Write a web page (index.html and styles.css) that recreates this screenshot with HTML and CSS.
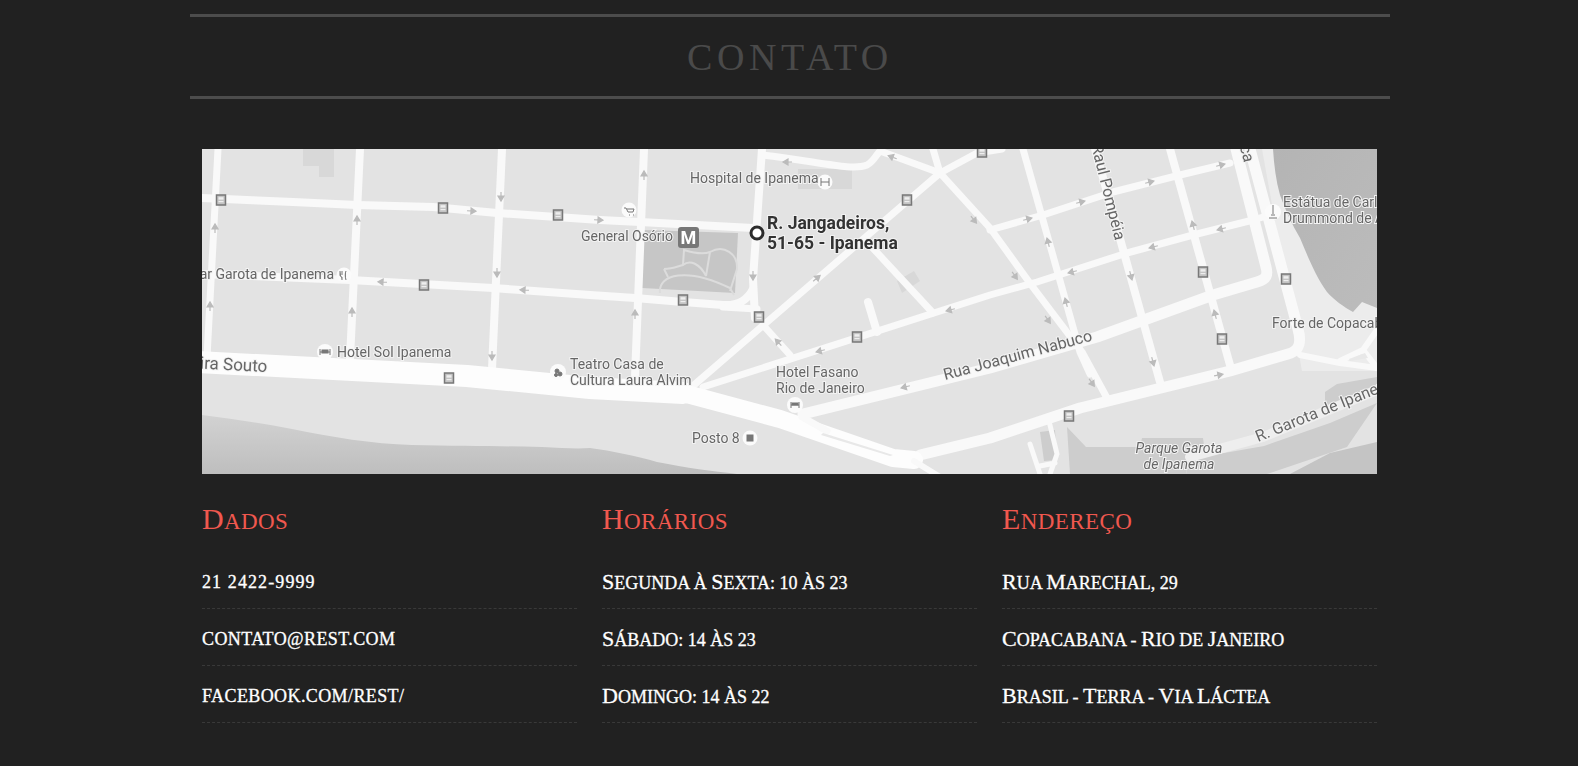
FILE: index.html
```html
<!DOCTYPE html>
<html lang="pt">
<head>
<meta charset="utf-8">
<title>Contato</title>
<link rel="stylesheet" href="styles.css">
</head>
<body>
<main class="page">
  <header class="title-bar"><h1 class="title">CONTATO</h1></header>
  <section class="content">
    <svg class="map" viewBox="0 0 1175 325" width="1175" height="325" role="img" aria-label="Mapa de Ipanema">
      <defs>
        <linearGradient id="sea1" x1="0" y1="0" x2="0" y2="1"><stop offset="0" stop-color="#d2d2d2"/><stop offset="1" stop-color="#bebebe"/></linearGradient>
        <linearGradient id="sea2" x1="0" y1="0" x2="1" y2="1"><stop offset="0" stop-color="#b4b4b4"/><stop offset="1" stop-color="#bcbcbc"/></linearGradient>
        <g id="bus"><rect x="-4.5" y="-5" width="9" height="10" fill="#c4c4c4" stroke="#777" stroke-width="1.5"/><rect x="-2.5" y="-2.8" width="5" height="2.4" fill="#eee"/><rect x="-2.5" y="1" width="5" height="1.2" fill="#eee"/></g>
        <path id="arr" class="arrow" d="M-5 0H2M-1-3L4 0L-1 3Z"/>
      </defs>
      <rect class="land" width="1175" height="325"/>
      <path fill="url(#sea1)" d="M0 266C30 270 60 274 90 280C130 288 170 295 210 296C260 297 300 297 340 298C360 299 375 300 388 299C410 302 435 307 455 313C485 319 510 322 535 325H0Z"/>
      <path class="beach" d="M1060 0H1175V222H1100Z"/>
      <path fill="url(#sea2)" d="M1071 0C1072 16 1074 32 1078 46C1084 62 1090 76 1098 89C1106 108 1114 128 1125 143C1132 151 1142 158 1151 163L1160 153L1175 159V0Z"/>
      <path class="sand" d="M865 278L884 298H938L940 289L1001 289L1002 296L988 304L984 325H868Z"/>
      <path class="sand" d="M984 325L988 310L1062 297L1128 274L1175 254L1145 298L1065 325Z"/>
      <path class="sand" d="M1123 260V243L1135 235L1175 228V240Z"/>
      <path class="sand-dark" d="M1088 325L1128 304L1175 293V325Z"/>
      <path class="sand" d="M838 283L853 281L855 311L842 312Z"/>
      <path class="park" d="M441 81L536 84L533 144L440 139Z"/>
      <path class="patch" d="M695 132L712 122L718 132L700 144Z"/>
      <path class="patch" d="M101 0H132V28H117V17H101Z"/>
      <path class="patch" d="M596 20H650V40H596Z"/>
      <path class="park-path" d="M458 144C456 125 485 118 528 139L532 146M462 120C470 120 474 118 481 116L482 101C495 105 503 105 508 103L504 127M481 116C488 110 498 115 504 127M508 103C522 95 536 105 535 120L528 142M462 120L466 128"/>
      <g class="roads">
        <path class="r7" d="M16 0L5 208"/>
        <path class="r8" d="M158 0L148 210"/>
        <path class="r8" d="M300 0L290 220"/>
        <path class="r8" d="M442 0L433 228"/>
        <path class="r8" d="M560 0L551 130L553 169"/>
        <path class="r8" d="M0 49L91 53L155 56L231 58L295 64L398 71L438 73L551 79"/>
        <path class="r8" d="M0 125L148 131L291 139L388 146L433 149L481 153L521 156C535 157 545 152 551 140"/>
        <path class="r7" d="M555 160L521 158"/>
        <path class="r7" d="M560 6C620 13 650 22 665 16C672 12 674 6 678 2L738 24"/>
        <path class="r7" d="M492 236L738 24L775 4L800 0"/>
        <path class="r7" d="M731 0L738 24L788 79L830 137L880 203L905 249"/>
        <path class="r7" d="M501 238L788 146L835 133L925 104L991 86L1051 71L1068 66"/>
        <path class="r7" d="M561 176L588 206"/>
        <path class="r7" d="M668 96L731 164"/>
        <path class="r8" d="M666 153L675 183"/>
        <path class="r11" d="M601 265L788 219L895 188L1011 146L1055 133C1065 130 1066 126 1064 118L1034 0"/>
        <path class="r11" d="M1048 0L1096 180C1100 195 1097 202 1086 205L1028 222L878 259L788 289L718 306"/>
        <path class="r7" d="M821 0L878 203L888 225"/>
        <path class="r8" d="M893 0L958 233"/>
        <path class="r8" d="M968 0L1028 216"/>
        <path class="r7" d="M788 81L841 66L911 43L978 26L1028 14"/>
        <path class="r22" d="M-5 213L265 227L388 239L481 244"/>
        <path class="r18" d="M481 244L578 270L691 309L712 311"/>
        <path class="r7" d="M600 268L625 282"/>
        <path class="r6" d="M712 312L738 328"/>
        <path class="r6" d="M1098 206L1138 214L1175 219"/>
        <path class="r6" d="M1138 212L1161 201L1175 181M1161 201L1175 219"/>
        <path class="r5" d="M847 272L855 305L848 325M828 295L838 325M838 317L853 314"/>
        <path class="strip" d="M988 308L1061 288L1175 241"/>
      </g>
      <path class="island" d="M621 284L691 306L688 307L619 286Z"/>
      <path class="island" d="M1147 210L1163 204L1166 209L1148 212Z"/>
      <g class="pins">
        <circle cx="142" cy="126" r="7.5"/><circle cx="123" cy="203" r="8"/><circle cx="356" cy="223" r="8"/>
        <circle cx="623" cy="33" r="7.5"/><circle cx="427" cy="61" r="7.5"/>
        <circle cx="593" cy="256" r="8"/><circle cx="548" cy="289" r="7.5"/><circle cx="1071" cy="63" r="8"/>
      </g>
      <g class="pin-glyphs">
        <path d="M138 122v4c0 1 1 2 2 2v3M140 122v4M144 122c-1 2-1 6 0 9"/>
        <path class="thin" d="M118 200v6M128 200v6M118 203h10"/><rect x="120" y="201" width="6" height="3"/>
        <circle cx="355" cy="222" r="2"/><circle cx="358" cy="225" r="2"/><circle cx="354" cy="226" r="1.5"/>
        <path class="thin" d="M422 59h2l2 4h5l1-3h-7M427 66h1M431 66h1"/>
        <path class="thin" d="M589 253v6M597 253v6M589 256h8"/><rect x="590" y="254" width="6" height="2"/>
        <rect x="545" y="286" width="6" height="6"/>
        <path d="M1071 56v9M1067 69h8M1069 66h4"/>
        <path class="thin" d="M619 29v8M627 29v8M619 33h8"/>
      </g>
      <g>
        <use href="#bus" x="19" y="51"/><use href="#bus" x="241" y="59"/><use href="#bus" x="356" y="66"/><use href="#bus" x="222" y="136"/><use href="#bus" x="247" y="229"/>
        <use href="#bus" x="481" y="151"/><use href="#bus" x="557" y="168"/><use href="#bus" x="655" y="188"/><use href="#bus" x="705" y="51"/><use href="#bus" x="780" y="3"/>
        <use href="#bus" x="1001" y="123"/><use href="#bus" x="1084" y="130"/><use href="#bus" x="1020" y="190"/><use href="#bus" x="867" y="267"/>
      </g>
      <g>
        <use href="#arr" transform="translate(13 79) rotate(-90)"/><use href="#arr" transform="translate(8 157) rotate(-90)"/><use href="#arr" transform="translate(155 71) rotate(-90)"/><use href="#arr" transform="translate(150 163) rotate(-90)"/>
        <use href="#arr" transform="translate(299 48) rotate(90)"/><use href="#arr" transform="translate(295 124) rotate(90)"/><use href="#arr" transform="translate(290 207) rotate(90)"/>
        <use href="#arr" transform="translate(270 62) rotate(3)"/><use href="#arr" transform="translate(180 133) rotate(183)"/><use href="#arr" transform="translate(322 141) rotate(183)"/><use href="#arr" transform="translate(397 71) rotate(3)"/>
        <use href="#arr" transform="translate(442 26) rotate(-90)"/><use href="#arr" transform="translate(433 165) rotate(-90)"/><use href="#arr" transform="translate(585 13) rotate(180)"/><use href="#arr" transform="translate(690 8) rotate(200)"/>
        <use href="#arr" transform="translate(551 127) rotate(90)"/><use href="#arr" transform="translate(615 129) rotate(-40)"/><use href="#arr" transform="translate(576 193) rotate(228)"/><use href="#arr" transform="translate(618 202) rotate(165)"/>
        <use href="#arr" transform="translate(748 161) rotate(165)"/><use href="#arr" transform="translate(703 238) rotate(165)"/><use href="#arr" transform="translate(772 71) rotate(52)"/>
        <use href="#arr" transform="translate(826 70) rotate(-15)"/><use href="#arr" transform="translate(879 53) rotate(-15)"/><use href="#arr" transform="translate(948 33) rotate(-15)"/><use href="#arr" transform="translate(1019 16) rotate(-15)"/>
        <use href="#arr" transform="translate(846 93) rotate(-105)"/><use href="#arr" transform="translate(813 127) rotate(55)"/><use href="#arr" transform="translate(870 123) rotate(165)"/><use href="#arr" transform="translate(951 98) rotate(165)"/><use href="#arr" transform="translate(1019 80) rotate(165)"/>
        <use href="#arr" transform="translate(991 76) rotate(-105)"/><use href="#arr" transform="translate(929 127) rotate(75)"/><use href="#arr" transform="translate(864 153) rotate(-105)"/><use href="#arr" transform="translate(846 171) rotate(55)"/>
        <use href="#arr" transform="translate(1013 165) rotate(-105)"/><use href="#arr" transform="translate(951 213) rotate(75)"/><use href="#arr" transform="translate(890 234) rotate(55)"/><use href="#arr" transform="translate(1017 226) rotate(-10)"/>
      </g>
      <g class="labels">
        <text x="488" y="34">Hospital de Ipanema</text>
        <text x="471" y="92" text-anchor="end">General Osório</text>
        <text x="132" y="130" text-anchor="end">Bar Garota de Ipanema</text>
        <text x="135" y="208">Hotel Sol Ipanema</text>
        <text x="368" y="220">Teatro Casa de</text>
        <text x="368" y="236">Cultura Laura Alvim</text>
        <text x="574" y="228">Hotel Fasano</text>
        <text x="574" y="244">Rio de Janeiro</text>
        <text x="490" y="294">Posto 8</text>
        <text x="1081" y="58">Estátua de Carlos</text>
        <text x="1081" y="74">Drummond de Andrade</text>
        <text x="1070" y="179">Forte de Copacabana</text>
        <text class="italic" x="977" y="304" text-anchor="middle">Parque Garota</text>
        <text class="italic" x="977" y="320" text-anchor="middle">de Ipanema</text>
        <text class="street big" x="65" y="223" text-anchor="end" transform="rotate(3 65 223)">Av. Vieira Souto</text>
        <text class="street" x="743" y="231" transform="rotate(-15 743 231)">Rua Joaquim Nabuco</text>
        <text class="street" x="913" y="92" text-anchor="end" transform="rotate(76 913 92)">Raul Pompéia</text>
        <text class="street" x="1042" y="14" text-anchor="end" transform="rotate(76 1042 14)">Atlântica</text>
        <text class="street" x="1056" y="293" transform="rotate(-22 1056 293)">R. Garota de Ipanema</text>
      </g>
      <rect class="metro" x="476" y="78" width="21" height="21" rx="3"/>
      <text class="metro-m" x="486.5" y="95" text-anchor="middle">M</text>
      <circle class="marker" cx="555" cy="84" r="6"/>
      <text class="addr" x="565" y="80">R. Jangadeiros,</text>
      <text class="addr" x="565" y="100">51-65 - Ipanema</text>
    </svg>
    <div class="columns">
      <section class="col">
        <h2 class="col-title"><span class="cap">D</span>ados</h2>
        <ul class="list">
          <li class="item phone">21 2422-9999</li>
          <li class="item lower">contato@rest.com</li>
          <li class="item lower">facebook.com/rest/</li>
        </ul>
      </section>
      <section class="col">
        <h2 class="col-title"><span class="cap">H</span>orários</h2>
        <ul class="list">
          <li class="item"><span class="cap">S</span>egunda à <span class="cap">S</span>exta: 10 às 23</li>
          <li class="item"><span class="cap">S</span>ábado: 14 às 23</li>
          <li class="item"><span class="cap">D</span>omingo: 14 às 22</li>
        </ul>
      </section>
      <section class="col">
        <h2 class="col-title"><span class="cap">E</span>ndereço</h2>
        <ul class="list">
          <li class="item"><span class="cap">R</span>ua <span class="cap">M</span>arechal, 29</li>
          <li class="item"><span class="cap">C</span>opacabana - <span class="cap">R</span>io de <span class="cap">J</span>aneiro</li>
          <li class="item"><span class="cap">B</span>rasil - <span class="cap">T</span>erra - <span class="cap">V</span>ia <span class="cap">L</span>áctea</li>
        </ul>
      </section>
    </div>
  </section>
</main>
</body>
</html>
```

FILE: styles.css
```css
html, body { margin: 0; padding: 0; background: #212121; }
body { font-family: "Liberation Serif", serif; color: #fff; overflow: hidden; }
.page { width: 1200px; margin: 0 0 0 190px; padding-top: 14px; }
.title-bar { border-top: 3px solid #4c4c4c; border-bottom: 3px solid #4c4c4c; height: 79px; display: flex; align-items: center; justify-content: center; }
.title { margin: 0; font-size: 38px; font-weight: 400; letter-spacing: 4.6px; color: #4a4a4a; line-height: 1; }
.content { padding: 50px 13px 0 12px; }
.map { display: block; width: 1175px; height: 325px; filter: blur(0.35px); }
.land { fill: #e3e3e3; }
.beach { fill: #ececec; }
.sand { fill: #cdcdcd; }
.sand-dark { fill: #c4c4c4; }
.park { fill: #c6c6c6; }
.patch { fill: #d8d8d8; }
.island { fill: #e8e8e8; }
.park-path { fill: none; stroke: #dcdcdc; stroke-width: 2; }
.roads { fill: none; stroke: #f9f9f9; stroke-linejoin: round; stroke-linecap: round; }
.r5 { stroke-width: 5; }
.r6 { stroke-width: 6; }
.r7 { stroke-width: 7; }
.r8 { stroke-width: 8; }
.r11 { stroke-width: 11; }
.r18 { stroke-width: 18; stroke: #fdfdfd; }
.r22 { stroke-width: 22; stroke: #fdfdfd; }
.strip { stroke-width: 10; stroke: #eeeeee; }
.pins circle { fill: #fbfbfb; }
.pin-glyphs { fill: #777; stroke: #777; stroke-width: 1; }
.pin-glyphs .thin { fill: none; }
.arrow { fill: #bbbbbb; stroke: #bbbbbb; stroke-width: 1.2; }
.labels text { font-family: Roboto, sans-serif; font-size: 14px; fill: #666; stroke: #f3f3f3; stroke-width: 2px; paint-order: stroke; }
.labels .italic { font-style: italic; }
.labels .street { font-size: 16px; }
.labels .big { font-size: 17px; }
.metro { fill: #777; }
.metro-m { font-family: Roboto, sans-serif; font-weight: 700; font-size: 18px; fill: #fff; }
.marker { fill: #fff; stroke: #2b2b2b; stroke-width: 3; }
.addr { font-family: Roboto, sans-serif; font-weight: 700; font-size: 17.5px; fill: #333; stroke: #f3f3f3; stroke-width: 2px; paint-order: stroke; }
.columns { display: grid; grid-template-columns: repeat(3, 375px); column-gap: 25px; }
.col-title { margin: 0; height: 78px; padding-top: 27px; box-sizing: border-box; font-size: 23px; font-weight: 400; line-height: 36px; letter-spacing: 0.4px; text-transform: uppercase; color: #f0584f; }
.col-title .cap { font-size: 30px; }
.list { margin: 0; padding: 0; list-style: none; }
.item { height: 57px; box-sizing: border-box; padding-top: 17px; font-size: 18px; line-height: 26px; text-transform: uppercase; border-bottom: 1px dashed #393939; -webkit-text-stroke: 0.3px #fff; }
.item .cap { font-size: 22px; }
.phone { letter-spacing: 1.1px; }
.lower { letter-spacing: 0.4px; }
```
